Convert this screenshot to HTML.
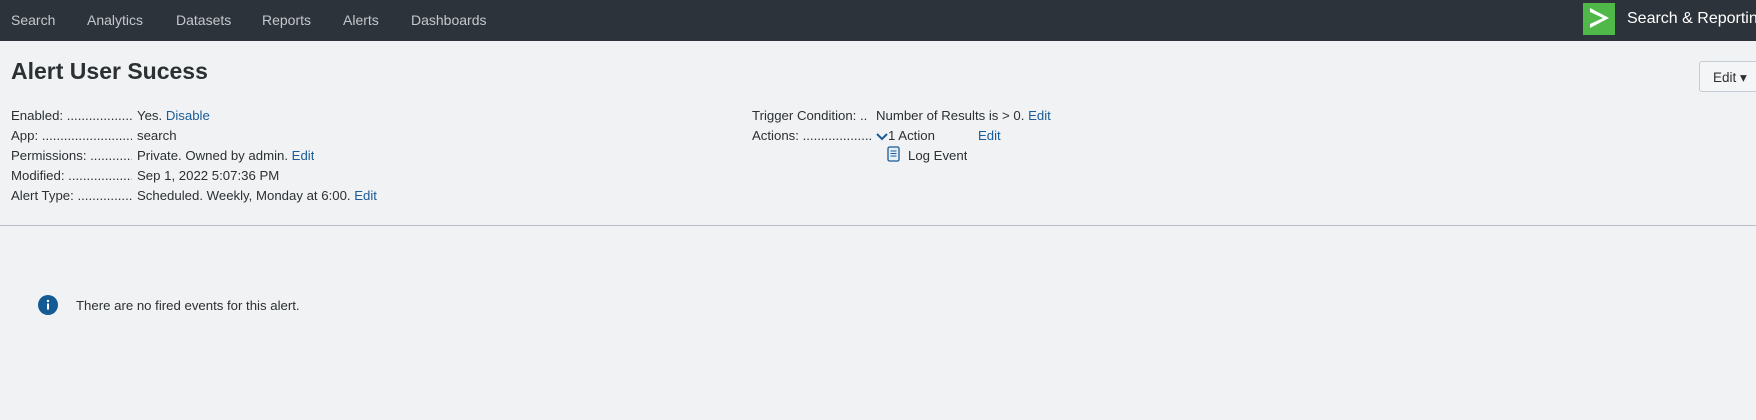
<!DOCTYPE html>
<html><head><meta charset="utf-8"><style>
*{margin:0;padding:0;box-sizing:border-box}
body{width:1756px;height:420px;overflow:hidden;background:#f1f2f4;font-family:"Liberation Sans",sans-serif;color:#2b3033;position:relative}
.nav{position:absolute;left:0;top:0;width:1756px;height:41px;background:#2d333b}
.nav span{position:absolute;top:12px;font-size:14px;color:#c4c8cd}
.logo{position:absolute;left:1583px;top:3px;width:32px;height:32px;background:#4fb848}
.brand{position:absolute;left:1627px;top:10px;font-size:16px;color:#fff;white-space:nowrap}
h1{position:absolute;left:11px;top:58px;font-size:23px;font-weight:bold;color:#2b3033}
.r{position:absolute;font-size:13.2px;white-space:nowrap;color:#2b3033;overflow:hidden}
.l{width:121px}
.l2{width:119px}
a{color:#1a5c97;text-decoration:none}
.hr{position:absolute;left:0;top:225px;width:1756px;height:1px;background:#b7bcc4}
.btn{position:absolute;left:1699px;top:61px;width:70px;height:31px;border:1px solid #c3cbd4;border-radius:3px;background:#f4f5f7;font-size:13.5px;padding:8px 0 0 13px}
</style></head><body>
<div class="nav">
<span style="left:11px">Search</span><span style="left:87px">Analytics</span><span style="left:176px">Datasets</span><span style="left:262px">Reports</span><span style="left:343px">Alerts</span><span style="left:411px">Dashboards</span>
<div class="logo"><svg width="32" height="32" viewBox="0 0 32 32"><path d="M7 5 L26 15 L7 25 L7 21 L20 15 L7 9 Z" fill="#fff"/></svg></div>
<div class="brand">Search &amp; Reporting</div>
</div>
<div class="btn">Edit ▾</div>
<h1>Alert User Sucess</h1>
<div class="r l" style="left:11px;top:108px">Enabled: ...........................................</div><div class="r" style="left:137px;top:108px">Yes. <a>Disable</a></div>
<div class="r l" style="left:11px;top:128px">App: ................................................</div><div class="r" style="left:137px;top:128px">search</div>
<div class="r l" style="left:11px;top:148px">Permissions: ......................................</div><div class="r" style="left:137px;top:148px">Private. Owned by admin. <a>Edit</a></div>
<div class="r l" style="left:11px;top:168px">Modified: ...........................................</div><div class="r" style="left:137px;top:168px">Sep 1, 2022 5:07:36 PM</div>
<div class="r l" style="left:11px;top:188px">Alert Type: .........................................</div><div class="r" style="left:137px;top:188px">Scheduled. Weekly, Monday at 6:00. <a>Edit</a></div>
<div class="r l2" style="left:752px;top:108px">Trigger Condition: ..</div><div class="r" style="left:876px;top:108px">Number of Results is &gt; 0. <a>Edit</a></div>
<div class="r l2" style="left:752px;top:128px">Actions: .............................................</div>
<svg style="position:absolute;left:876px;top:133px" width="12" height="8" viewBox="0 0 12 8"><path d="M1 1 L6 6 L11 1" stroke="#1a5c97" stroke-width="2" fill="none"/></svg>
<div class="r" style="left:888px;top:128px">1 Action</div><div class="r" style="left:978px;top:128px"><a>Edit</a></div>
<svg style="position:absolute;left:887px;top:146px" width="13" height="16" viewBox="0 0 13 16"><rect x="1" y="1" width="11" height="14" rx="1.5" fill="#e8eef5" stroke="#1a5c97" stroke-width="1.3"/><path d="M3.5 5h6M3.5 7.5h6M3.5 10h6" stroke="#1a5c97" stroke-width="1"/></svg>
<div class="r" style="left:908px;top:148px">Log Event</div>
<div class="hr"></div>
<svg style="position:absolute;left:38px;top:295px" width="20" height="20" viewBox="0 0 20 20"><circle cx="10" cy="10" r="10" fill="#125c93"/><rect x="9" y="8.5" width="2" height="6" fill="#fff"/><circle cx="10" cy="6" r="1.2" fill="#fff"/></svg>
<div class="r" style="left:76px;top:298px">There are no fired events for this alert.</div>
</body></html>
